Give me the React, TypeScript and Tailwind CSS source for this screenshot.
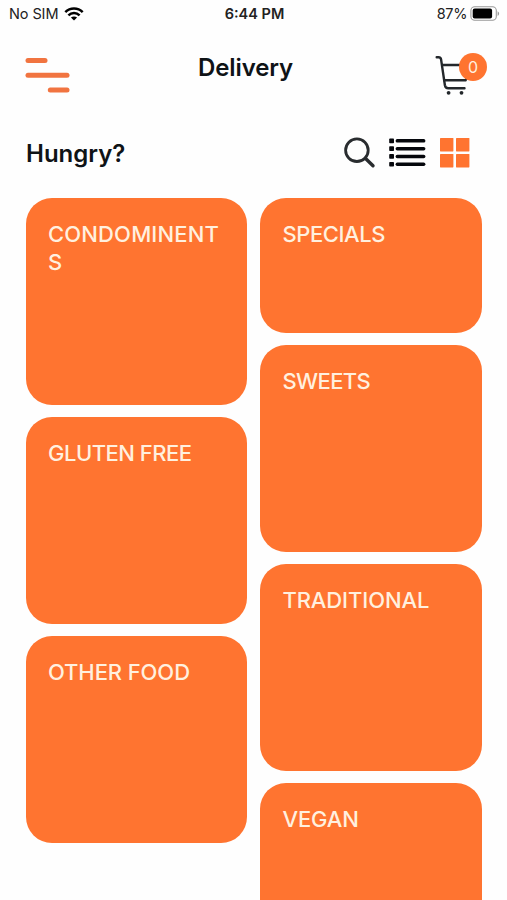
interface Category {
  name: string;
  size: "short" | "tall";
  tracking: string;
}

const LEFT_COLUMN: Category[] = [
  { name: "CONDOMINENTS", size: "tall", tracking: "tracking-[0.15px]" },
  { name: "GLUTEN FREE", size: "tall", tracking: "tracking-[-0.5px]" },
  { name: "OTHER FOOD", size: "tall", tracking: "tracking-[-0.1px]" },
];

const RIGHT_COLUMN: Category[] = [
  { name: "SPECIALS", size: "short", tracking: "tracking-[-0.4px]" },
  { name: "SWEETS", size: "tall", tracking: "tracking-[-0.6px]" },
  { name: "TRADITIONAL", size: "tall", tracking: "tracking-[-0.1px]" },
  { name: "VEGAN", size: "tall", tracking: "tracking-[-0.1px]" },
];

function WifiIcon() {
  return (
    <svg width="20" height="14" viewBox="0 0 20 14" fill="none" stroke="#000" strokeWidth="2.5">
      <path d="M1.3 5.2C6.2 0.4 13.8 0.4 18.7 5.2" />
      <path d="M4.4 8.4C7.6 5.3 12.4 5.3 15.6 8.4" />
      <path d="M10 13.6L6.9 10.6C8.6 9 11.4 9 13.1 10.6Z" fill="#000" stroke="none" />
    </svg>
  );
}

function BatteryIcon() {
  return (
    <svg width="30" height="16" viewBox="0 0 30 16">
      <rect x="0.9" y="0.8" width="25.4" height="13.4" rx="3.8" fill="#fff" stroke="#999" strokeWidth="1.1" />
      <rect x="2.7" y="2.6" width="19.4" height="9.8" rx="2" fill="#000" />
      <path d="M27.6 5.3C29.6 6.2 29.6 9 27.6 9.9Z" fill="#999" />
    </svg>
  );
}

function MenuIcon() {
  return (
    <svg width="46" height="38" viewBox="0 0 46 38" stroke="#f17440" strokeWidth="5" strokeLinecap="round">
      <path d="M3 4.5H20" />
      <path d="M3 19.3H42" />
      <path d="M25.3 34H42" />
    </svg>
  );
}

function CartIcon() {
  return (
    <svg width="36" height="42" viewBox="0 0 36 42" fill="none" stroke="#23272b" strokeWidth="2.4" strokeLinecap="round" strokeLinejoin="round">
      <path d="M2.7 3.3H4.6Q6.6 3.3 7.1 5.6L10.9 31.3Q11.4 34.2 14.2 34.2H30.5" />
      <path d="M8.2 11H29" />
      <path d="M10.2 26.3H31.5L34 22" />
      <circle cx="14.6" cy="38.8" r="1.9" fill="#23272b" stroke="none" />
      <circle cx="27.5" cy="38.8" r="1.9" fill="#23272b" stroke="none" />
    </svg>
  );
}

function SearchIcon() {
  return (
    <svg width="32" height="32" viewBox="0 0 32 32" fill="none" stroke="#292c2f">
      <circle cx="12.9" cy="13.2" r="11.3" strokeWidth="2.8" />
      <path d="M21.3 21.2L29 28.8" strokeWidth="3.4" strokeLinecap="round" />
    </svg>
  );
}

function ListIcon() {
  const rows = [2.8, 10.6, 18.4, 26.2];
  return (
    <svg width="37" height="30" viewBox="0 0 37 30" fill="#05070c">
      {rows.map((y) => (
        <g key={y}>
          <rect x="0.2" y={y - 2.3} width="4.8" height="4.7" rx="0.8" />
          <rect x="6.6" y={y - 1.7} width="29.8" height="3.5" rx="1.7" />
        </g>
      ))}
    </svg>
  );
}

function GridIcon() {
  return (
    <svg width="30" height="30" viewBox="0 0 30 30" fill="#ff7430">
      <rect x="0" y="0" width="13.4" height="13.4" rx="0.6" />
      <rect x="16" y="0" width="13.4" height="13.4" rx="0.6" />
      <rect x="0" y="16" width="13.4" height="13.4" rx="0.6" />
      <rect x="16" y="16" width="13.4" height="13.4" rx="0.6" />
    </svg>
  );
}

function StatusBar() {
  return (
    <div className="grid h-[27px] grid-cols-3 items-center pl-[9px] pr-[7px] text-[14.5px] text-[#222]">
      <div className="flex items-center gap-[6px]">
        <span className="tracking-[-0.1px]">No SIM</span>
        <WifiIcon />
      </div>
      <span className="text-center font-semibold">6:44 PM</span>
      <div className="flex items-center justify-end gap-[3px]">
        <span className="tracking-[-0.4px]">87%</span>
        <BatteryIcon />
      </div>
    </div>
  );
}

function CategoryCard({ category }: { category: Category }) {
  const height = category.size === "tall" ? "h-[206.5px]" : "h-[134.5px]";
  return (
    <button
      className={`${height} ${category.tracking} flex w-full shrink-0 items-start rounded-[26px] bg-[#ff7430] px-[22px] pt-[22px] text-left text-[22px] font-medium leading-7 text-[#fff0df]`}
    >
      <span className="w-full break-all">{category.name}</span>
    </button>
  );
}

function CategoryColumn({ categories }: { categories: Category[] }) {
  return (
    <div className="flex w-[221.4px] flex-col gap-[12.5px]">
      {categories.map((category) => (
        <CategoryCard key={category.name} category={category} />
      ))}
    </div>
  );
}

export default function App() {
  return (
    <div className="flex h-[900px] w-[507px] flex-col overflow-hidden bg-[#fefefe] font-['Inter','Liberation_Sans',sans-serif]">
      <StatusBar />

      <header className="flex h-[83px] items-start pl-[25px] pr-[20px] pt-[26px]">
        <button className="mt-[3px]">
          <MenuIcon />
        </button>
        <h1 className="-mt-px ml-[127px] text-2xl font-semibold tracking-[-0.1px] text-[#0f1316]">Delivery</h1>
        <button className="relative ml-auto mt-px w-[53px]">
          <CartIcon />
          <span className="absolute -top-px right-0 flex size-7 items-center justify-center rounded-full bg-[#ff7430] text-base text-[#fff0df]">
            0
          </span>
        </button>
      </header>

      <div className="flex h-[88px] items-center justify-between pl-[26px] pr-[37px]">
        <h2 className="text-2xl font-semibold text-[#0f1316]">Hungry?</h2>
        <div className="flex items-center pb-[2px]">
          <button className="mr-[13px]">
            <SearchIcon />
          </button>
          <button className="mr-[14px]">
            <ListIcon />
          </button>
          <button>
            <GridIcon />
          </button>
        </div>
      </div>

      <main className="flex min-h-0 flex-1 gap-[13px] overflow-hidden pl-[26px]">
        <CategoryColumn categories={LEFT_COLUMN} />
        <CategoryColumn categories={RIGHT_COLUMN} />
      </main>
    </div>
  );
}
